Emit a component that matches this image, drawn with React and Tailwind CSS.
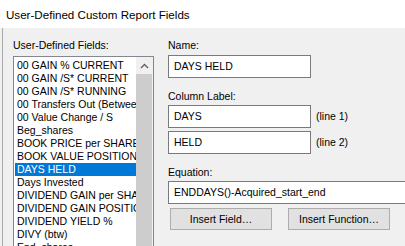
import React from 'react';

const fields = [
  '00 GAIN % CURRENT',
  '00 GAIN /S* CURRENT',
  '00 GAIN /S* RUNNING',
  '00 Transfers Out (Between Accounts)',
  '00 Value Change / S',
  'Beg_shares',
  'BOOK PRICE per SHARE',
  'BOOK VALUE POSITION',
  'DAYS HELD',
  'Days Invested',
  'DIVIDEND GAIN per SHARE',
  'DIVIDEND GAIN POSITION',
  'DIVIDEND YIELD %',
  'DIVY (btw)',
  'End_shares',
];

function TextBox({ value, className = 'w-[143px]' }) {
  return (
    <div className={`h-[23px] ${className} shrink-0 border border-[#7a7a7a] bg-white pl-[5px] flex items-center whitespace-nowrap overflow-hidden`}>
      {value}
    </div>
  );
}

function Button({ children }) {
  return (
    <div className="h-[22px] w-[102px] border border-[#adadad] bg-[#e1e1e1] flex items-center justify-center">
      {children}
    </div>
  );
}

export default function App() {
  const selected = 'DAYS HELD';

  return (
    <div className="w-[405px] h-[246px] overflow-hidden bg-[#f0f0f0] text-black text-[10.5px] leading-[13px] font-['Liberation_Sans',Arial,sans-serif]">
      {/* title bar */}
      <div className="h-[28px] bg-white pl-[6px] flex items-center text-[11.6px]">
        User-Defined Custom Report Fields
      </div>

      <div className="flex h-[218px]">
        <div className="w-[2px] shrink-0" />
        <div className="w-[1px] shrink-0 bg-[#a9a9a9]" />

        {/* field list */}
        <div className="ml-[10px] pt-[11px] w-[141px] shrink-0 flex flex-col">
          <div className="h-[13px]">User-Defined Fields:</div>
          <div className="mt-[4px] flex-1 border border-[#828790] bg-white flex pl-[1px] pt-[2px]">
            <div className="w-[121px] flex flex-col">
              {fields.map((f) => (
                <div
                  key={f}
                  className={
                    f === selected
                      ? 'h-[13px] pl-[2px] whitespace-nowrap overflow-hidden bg-[#0078d7] text-white'
                      : 'h-[13px] pl-[2px] whitespace-nowrap overflow-hidden'
                  }
                >
                  {f}
                </div>
              ))}
            </div>
            <div className="w-[17px] -mt-[2px] bg-[#f0f0f0] flex flex-col">
              <div className="h-[17px] flex items-center justify-center">
                <svg width="9" height="6" viewBox="0 0 9 6">
                  <path d="M1 5 L4.5 1.5 L8 5" fill="none" stroke="#606060" strokeWidth="1.4" />
                </svg>
              </div>
              <div className="flex-1 mr-[1px] bg-[#cdcdcd]" />
            </div>
          </div>
        </div>

        {/* editor */}
        <div className="ml-[14px] pt-[11px] flex flex-col">
          <div className="h-[13px]">Name:</div>
          <div className="mt-[3px]">
            <TextBox value="DAYS HELD" />
          </div>

          <div className="mt-[12px] h-[13px]">Column Label:</div>
          <div className="mt-[2px] flex items-center">
            <TextBox value="DAYS" />
            <span className="ml-[5px]">(line 1)</span>
          </div>
          <div className="mt-[3px] flex items-center">
            <TextBox value="HELD" />
            <span className="ml-[5px]">(line 2)</span>
          </div>

          <div className="mt-[12px] h-[13px]">Equation:</div>
          <div className="mt-[2px]">
            <TextBox value="ENDDAYS()-Acquired_start_end" className="w-[260px]" />
          </div>

          <div className="mt-[4px] ml-[2px] flex gap-[16px]">
            <Button>Insert Field…</Button>
            <Button>Insert Function…</Button>
          </div>
        </div>
      </div>
    </div>
  );
}
